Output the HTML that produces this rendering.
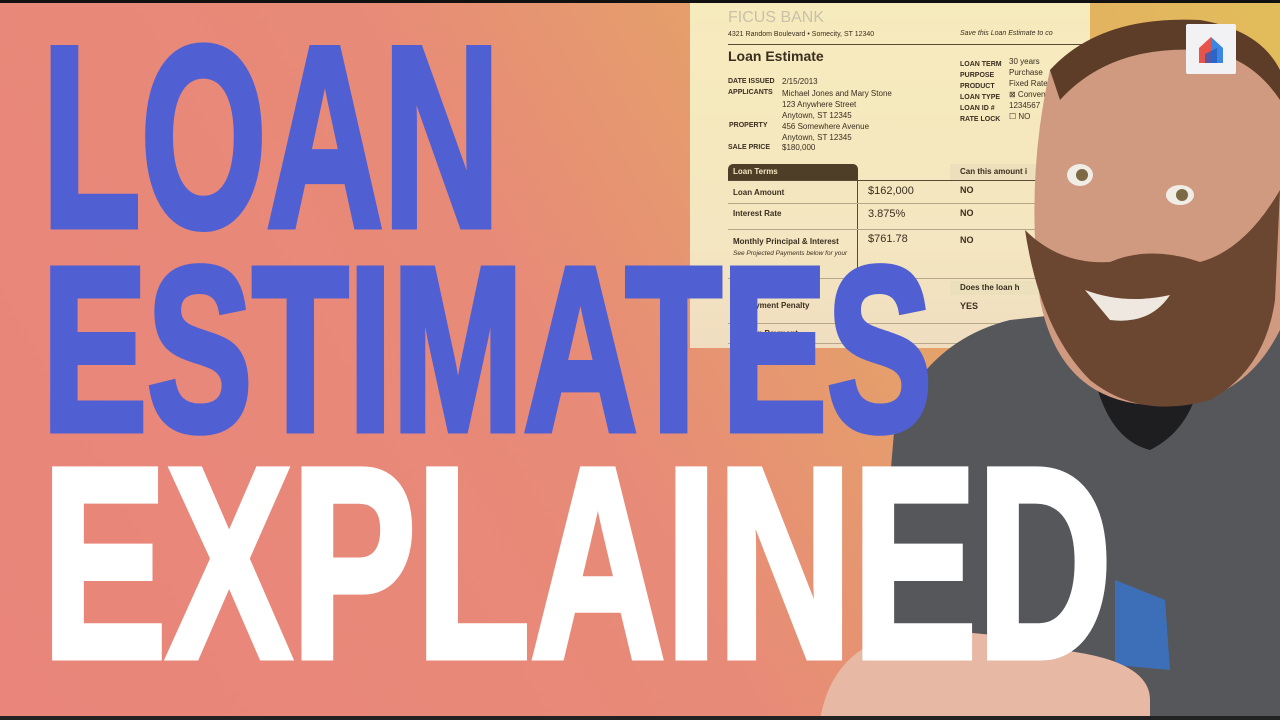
<!DOCTYPE html>
<html><head><style>
*{margin:0;padding:0;box-sizing:border-box}
body{width:1280px;height:720px;overflow:hidden;position:relative;font-family:"Liberation Sans",sans-serif;
background:linear-gradient(60deg,#e9857b 0%,#e88a78 45%,#e4a468 70%,#e2bd5a 100%);}
.doc{position:absolute;left:690px;top:3px;width:400px;height:345px;background:linear-gradient(180deg,#f6ebbd,#f4e6c0 70%,#f0ddc0);}
.doc div{position:absolute;color:#3a2e20;white-space:nowrap}
.s{font-size:7px;font-weight:bold}
.v{font-size:8px}
.hl{position:absolute;background:#5a4a35;height:1px}
</style></head><body>
<div style="position:absolute;left:0;top:0;width:1280px;height:3px;background:#111"></div>
<div class="doc">
<div style="left:38px;top:6px;font-size:16px;color:#c9c0a8">FICUS BANK</div>
<div style="left:38px;top:28px;font-size:7px">4321 Random Boulevard • Somecity, ST 12340</div>
<div style="left:270px;top:27px;font-size:7px;font-style:italic">Save this Loan Estimate to co</div>
<div class="hl" style="left:38px;top:41px;width:360px"></div>
<div style="left:38px;top:45px;font-size:14px;font-weight:bold">Loan Estimate</div>
<div class="s" style="left:38px;top:75px">DATE ISSUED</div><div class="v" style="left:92px;top:74px">2/15/2013</div>
<div class="s" style="left:38px;top:86px">APPLICANTS</div><div class="v" style="left:92px;top:85px;line-height:11px">Michael Jones and Mary Stone<br>123 Anywhere Street<br>Anytown, ST 12345</div>
<div class="s" style="left:39px;top:119px">PROPERTY</div><div class="v" style="left:92px;top:118px;line-height:11px">456 Somewhere Avenue<br>Anytown, ST 12345</div>
<div class="s" style="left:38px;top:141px">SALE PRICE</div><div class="v" style="left:92px;top:140px">$180,000</div>
<div class="s" style="left:270px;top:56px;line-height:11px">LOAN TERM<br>PURPOSE<br>PRODUCT<br>LOAN TYPE<br>LOAN ID #<br>RATE LOCK</div>
<div class="v" style="left:319px;top:53px;line-height:11px">30 years<br>Purchase<br>Fixed Rate<br>⊠ Conven<br>1234567<br>☐ NO</div>
<div style="left:38px;top:161px;width:130px;height:16px;background:#4e3d27;border-radius:5px 5px 0 0;color:#f3e6c0;font-size:8px;font-weight:bold;padding:3px 5px">Loan Terms</div>
<div style="left:260px;top:161px;width:140px;height:16px;background:#ece0bc;font-size:8px;font-weight:bold;padding:3px 10px">Can this amount i</div>
<div class="hl" style="left:38px;top:177px;width:360px"></div>
<div class="hl" style="left:167px;top:177px;width:1px;height:100px"></div>
<div style="left:43px;top:185px;font-size:8px;font-weight:bold">Loan Amount</div><div style="left:178px;top:182px;font-size:11px">$162,000</div><div style="left:270px;top:182px;font-size:9px;font-weight:bold">NO</div>
<div class="hl" style="left:38px;top:200px;width:360px;background:#b5a88a"></div>
<div style="left:43px;top:206px;font-size:8px;font-weight:bold">Interest Rate</div><div style="left:178px;top:205px;font-size:11px">3.875%</div><div style="left:270px;top:205px;font-size:9px;font-weight:bold">NO</div>
<div class="hl" style="left:38px;top:226px;width:360px;background:#b5a88a"></div>
<div style="left:43px;top:234px;font-size:8px;font-weight:bold">Monthly Principal &amp; Interest</div><div style="left:178px;top:230px;font-size:11px">$761.78</div><div style="left:270px;top:232px;font-size:9px;font-weight:bold">NO</div>
<div style="left:43px;top:247px;font-size:6.5px;font-style:italic">See Projected Payments below for your</div>
<div class="hl" style="left:38px;top:275px;width:360px;background:#b5a88a"></div>
<div style="left:260px;top:278px;width:140px;height:14px;background:#ece0bc;font-size:8px;font-weight:bold;padding:2px 10px">Does the loan h</div>
<div style="left:43px;top:298px;font-size:8px;font-weight:bold">Prepayment Penalty</div><div style="left:270px;top:298px;font-size:9px;font-weight:bold">YES</div>
<div class="hl" style="left:38px;top:320px;width:360px;background:#b5a88a"></div>
<div style="left:43px;top:326px;font-size:8px;font-weight:bold">Balloon Payment</div>
<div class="hl" style="left:38px;top:340px;width:360px;background:#b5a88a"></div>
</div>
<!-- person -->
<svg width="1280" height="720" style="position:absolute;left:0;top:0">
<path d="M870,720 L895,420 Q930,340 1010,320 L1280,290 L1280,720 Z" fill="#55575b"/>
<path d="M1095,380 Q1110,440 1150,450 Q1190,430 1200,380 Z" fill="#1e1e20"/>
<path d="M1050,70 Q1090,30 1200,35 Q1270,50 1280,100 L1280,330 Q1240,410 1150,405 Q1060,400 1040,300 Q1025,180 1050,70 Z" fill="#cf9a80"/>
<path d="M1050,70 Q1100,15 1200,20 Q1260,30 1280,70 L1280,100 Q1250,55 1200,50 Q1110,45 1060,100 Z" fill="#5e3d28"/>
<path d="M1025,230 Q1040,330 1090,380 Q1140,420 1210,400 Q1265,370 1275,300 L1280,190 Q1245,250 1200,262 Q1150,245 1110,262 Q1060,265 1025,230 Z" fill="#6b4630"/>
<path d="M1085,290 Q1125,305 1170,295 Q1150,325 1110,320 Z" fill="#efe8e0"/>
<ellipse cx="1080" cy="175" rx="13" ry="11" fill="#f0ece6"/><circle cx="1082" cy="175" r="6" fill="#7d6a45"/>
<ellipse cx="1180" cy="195" rx="14" ry="10" fill="#f0ece6"/><circle cx="1182" cy="195" r="6" fill="#7d6a45"/>
<path d="M1115,580 L1165,600 L1170,670 L1115,665 Z" fill="#3d6fb8"/>
<path d="M820,720 Q830,660 880,640 Q960,620 1060,650 Q1150,660 1150,700 L1150,720 Z" fill="#e7b8a3"/>
</svg>
<svg width="1280" height="720" style="position:absolute;left:0;top:0">
<g font-family="'Liberation Sans',sans-serif" font-weight="bold" stroke-width="7" stroke-linejoin="miter">
<text x="42" y="226" font-size="258" fill="#5060d3" stroke="#5060d3" textLength="458" lengthAdjust="spacingAndGlyphs">LOAN</text>
<text x="42" y="430" font-size="234" fill="#5060d3" stroke="#5060d3" textLength="890" lengthAdjust="spacingAndGlyphs">ESTIMATES</text>
<text x="42" y="657" font-size="272" fill="#ffffff" stroke="#ffffff" textLength="1070" lengthAdjust="spacingAndGlyphs">EXPLAINED</text>
</g></svg>
<div style="position:absolute;left:1186px;top:24px;width:50px;height:50px;background:#f2f2f4;border-radius:2px">
<svg width="50" height="50"><path d="M13,24 L25,13 L25,39 L13,39 Z" fill="#e9544a"/><path d="M25,13 L37,24 L37,39 L25,39 Z" fill="#3a86e0"/><path d="M19,30 L31,24 L31,39 L19,39 Z" fill="#2a5cc0" opacity=".8"/></svg></div>
<div style="position:absolute;left:0;top:716px;width:1280px;height:4px;background:#222"></div>
</body></html>
